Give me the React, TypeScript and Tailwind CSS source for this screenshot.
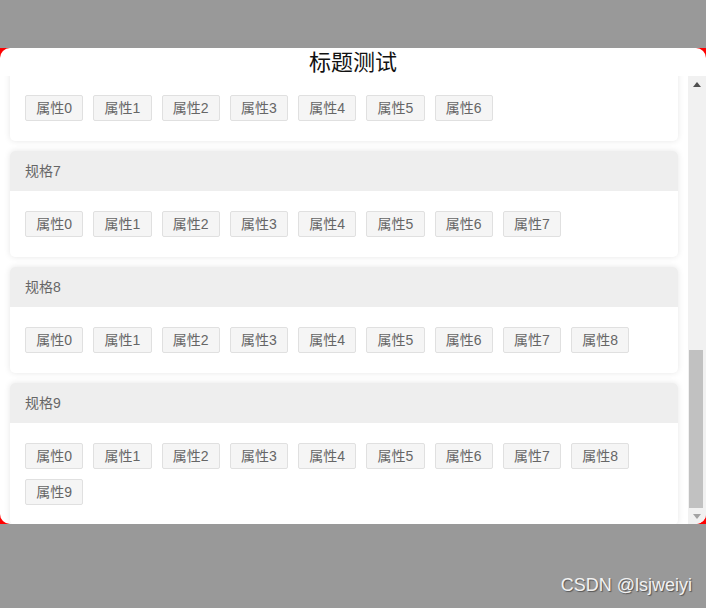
import { useEffect, useRef } from 'react';

const specs = Array.from({ length: 10 }, (_, i) => ({
  name: `规格${i}`,
  attrs: Array.from({ length: i + 1 }, (_, j) => `属性${j}`),
}));

function SpecCard({ name, attrs }: { name: string; attrs: string[] }) {
  return (
    <div className="bg-white rounded-[5px] overflow-hidden shadow-[0_0_6px_rgba(0,0,0,0.1)]">
      <div className="h-[40px] flex items-center px-[15px] bg-[#eeeeee] text-[14px] text-[#666]">{name}</div>
      <div className="flex flex-wrap gap-[10px] px-[15px] py-[20px]">
        {attrs.map((a) => (
          <span
            key={a}
            className="h-[26px] w-[58.25px] flex items-center justify-center border border-[#e0e0e0] bg-[#f5f5f5] rounded-[2px] text-[14px] text-[#666] leading-none"
          >
            {a}
          </span>
        ))}
      </div>
    </div>
  );
}

// static drawing of the window scrollbar, parked at the bottom
function ScrollBar() {
  return (
    <div className="w-[18px] shrink-0 bg-[#f1f1f1] flex flex-col items-center">
      <div className="h-[17px] flex items-center justify-center">
        <svg width="8" height="5" viewBox="0 0 8 5">
          <path d="M0 5 L4 0 L8 5 Z" fill="#505050" />
        </svg>
      </div>
      <div className="flex-1" />
      <div className="h-[158px] w-[14px] mr-[2px] bg-[#c1c1c1]" />
      <div className="h-[16px] flex items-center justify-center">
        <svg width="8" height="5" viewBox="0 0 8 5">
          <path d="M0 0 L8 0 L4 5 Z" fill="#a3a3a3" />
        </svg>
      </div>
    </div>
  );
}

export default function App() {
  const scrollRef = useRef<HTMLDivElement>(null);

  useEffect(() => {
    const el = scrollRef.current;
    // last card runs 1px past the bottom edge in the screenshot
    if (el) el.scrollTop = el.scrollHeight - el.clientHeight - 1;
  }, []);

  return (
    <div className="w-[706px] h-[608px] bg-[#999999] flex flex-col font-['Liberation_Sans','Noto_Sans_CJK_SC',sans-serif]">
      <div className="h-[48px] shrink-0" />
      <div className="h-[476px] shrink-0 bg-[#ff0000]">
        <div className="h-full bg-white rounded-[10px] flex flex-col overflow-hidden">
          <div className="h-[28px] shrink-0 flex items-center justify-center text-[22px] text-[#111] font-['Liberation_Serif','Noto_Sans_CJK_SC',serif]">
            标题测试
          </div>
          <div className="flex-1 min-h-0 flex">
            <div ref={scrollRef} className="flex-1 overflow-y-auto [scrollbar-width:none]">
              <div className="flex flex-col gap-[10px] px-[10px] pt-[11px]">
                {specs.map((s) => (
                  <SpecCard key={s.name} name={s.name} attrs={s.attrs} />
                ))}
              </div>
            </div>
            <ScrollBar />
          </div>
        </div>
      </div>
      <div className="flex-1 flex items-end justify-end pr-[14px] pb-[9px]">
        <span className="text-[18px] text-[#f2f2f2] [text-shadow:1px_1px_1px_rgba(0,0,0,0.45)]">CSDN @lsjweiyi</span>
      </div>
    </div>
  );
}
